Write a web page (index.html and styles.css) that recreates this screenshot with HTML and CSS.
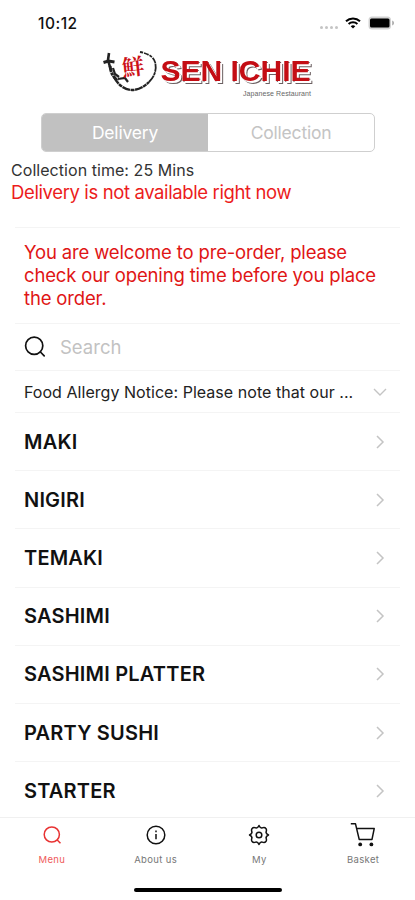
FILE: index.html
```html
<!DOCTYPE html>
<html lang="en">

<head>
    <meta charset="UTF-8">
    <meta name="viewport" content="width=device-width, initial-scale=1.0">
    <title>Sen Ichie</title>
    <link rel="stylesheet" href="styles.css">
</head>

<body>
    <div class="app">
        <div class="status-bar">
            <span class="time">10:12</span>
            <div class="status-icons">
                <span class="signal"><i></i><i></i><i></i><i></i></span>
                <svg class="wifi" width="16" height="12" viewBox="0 0 16 12" fill="none" stroke="#000" stroke-width="2">
                    <path d="M1 4.2a10.2 10.2 0 0 1 14 0M3.6 7a6.4 6.4 0 0 1 8.8 0" />
                    <path d="M8 11.6 5.7 9.3a3.4 3.4 0 0 1 4.6 0z" fill="#000" stroke="none" />
                </svg>
                <svg class="battery" width="27" height="14" viewBox="0 0 27 14">
                    <rect x="0.5" y="0.5" width="22.5" height="13" rx="3.5" fill="#d2d2d2" />
                    <rect x="2" y="2.5" width="19.5" height="9" rx="1.5" fill="#000" />
                    <path d="M24.2 4.5c2.4 1 2.4 4 0 5z" fill="#aaa" />
                </svg>
            </div>
        </div>

        <div class="logo">
            <svg width="214" height="50" viewBox="0 0 214 50">
                <!-- brush circle -->
                <g fill="none" stroke="#222">
                    <path d="M.5 12.500l5-1.500 6 1" stroke-width="3" />
                    <path d="M6 3l-1 7 2 7" stroke-width="2.600" />
                    <path d="M7 16c1 7 3 11 8 15" stroke-width="3" stroke-dasharray="6 .8 3 .6" />
                    <path d="M10 18l2 6 4 3M15 29l7-1 3 4" stroke-width="2.200" />
                    <path d="M11 27c4 8 11 13 18 13 6 0 12-3 17-8" stroke-width="2.400" stroke-dasharray="8 .6 4 .6" />
                    <path d="M46 32c6-6 8-13 6-20" stroke-width="1.800" stroke-dasharray="8 .5 3 .5" />
                    <path d="M52 12c-1-4-5-8-15-10" stroke-width="1.800" stroke-dasharray="5 1 3 1" />
                </g>
                <text class="logo-kanji" x="19" y="25" transform="rotate(-6 30 17)">鮮</text>
                <text class="logo-name" x="57.500" y="31" textLength="150" lengthAdjust="spacingAndGlyphs">SEN ICHIE</text>
                <text class="logo-tag" x="140" y="45.500" textLength="68">Japanese Restaurant</text>
            </svg>
        </div>

        <div class="tabs">
            <div class="tab active">Delivery</div>
            <div class="tab">Collection</div>
        </div>

        <div class="info">
            <div class="collection-time">Collection time: 25 Mins</div>
            <div class="unavailable">Delivery is not available right now</div>
        </div>

        <div class="list">
            <div class="notice">You are welcome to pre-order, please<br>check our opening time before you place<br>the order.</div>
            <div class="search">
                <svg width="22" height="22" viewBox="0 0 22 22" fill="none" stroke="#111" stroke-width="1.7" stroke-linecap="round">
                    <circle cx="10.2" cy="9.8" r="8.6" />
                    <path d="M16.4 16l3.800 3.800" />
                </svg>
                <span>Search</span>
            </div>
            <div class="allergy">
                <span>Food Allergy Notice: Please note that our ...</span>
                <svg width="14" height="8" viewBox="0 0 14 8" fill="none" stroke="#c4c4c4" stroke-width="1.4"><path d="M1 1l6 6 6-6" /></svg>
            </div>
            <div class="category"><span>MAKI</span><svg class="chevron" viewBox="0 0 8 14"><path d="M1 1l6 6-6 6" /></svg></div>
            <div class="category"><span>NIGIRI</span><svg class="chevron" viewBox="0 0 8 14"><path d="M1 1l6 6-6 6" /></svg></div>
            <div class="category"><span>TEMAKI</span><svg class="chevron" viewBox="0 0 8 14"><path d="M1 1l6 6-6 6" /></svg></div>
            <div class="category"><span>SASHIMI</span><svg class="chevron" viewBox="0 0 8 14"><path d="M1 1l6 6-6 6" /></svg></div>
            <div class="category"><span>SASHIMI PLATTER</span><svg class="chevron" viewBox="0 0 8 14"><path d="M1 1l6 6-6 6" /></svg></div>
            <div class="category"><span>PARTY SUSHI</span><svg class="chevron" viewBox="0 0 8 14"><path d="M1 1l6 6-6 6" /></svg></div>
            <div class="category"><span>STARTER</span><svg class="chevron" viewBox="0 0 8 14"><path d="M1 1l6 6-6 6" /></svg></div>
        </div>

        <div class="nav">
            <div class="nav-item active">
                <svg width="26" height="26" viewBox="0 0 26 26">
                    <circle cx="12.8" cy="12.5" r="7.6" />
                    <path d="M18.200 18l3.300 3.300" />
                </svg>
                <span>Menu</span>
            </div>
            <div class="nav-item">
                <svg width="26" height="26" viewBox="0 0 26 26">
                    <circle cx="13" cy="13" r="8.8" />
                    <path d="M13 12v5.3M13 8.5v1.8" />
                </svg>
                <span>About us</span>
            </div>
            <div class="nav-item">
                <!-- eight-lobed cog -->
                <svg width="26" height="26" viewBox="0 0 26 26" stroke-linejoin="round">
                    <path d="M13 3.500Q14.200 6.300 16.100 5.900Q18.700 5 19.700 6.300Q21 7.300 20.100 9.900Q19.700 11.800 22.500 13Q19.700 14.200 20.100 16.100Q21 18.700 19.700 19.700Q18.700 21 16.100 20.100Q14.200 19.700 13 22.500Q11.800 19.700 9.900 20.100Q7.300 21 6.300 19.700Q5 18.700 5.900 16.100Q6.300 14.200 3.500 13Q6.300 11.800 5.900 9.900Q5 7.300 6.300 6.300Q7.300 5 9.900 5.900Q11.800 6.300 13 3.500z" />
                    <circle cx="13" cy="13" r="2.800" />
                </svg>
                <span>My</span>
            </div>
            <div class="nav-item">
                <svg width="26" height="26" viewBox="0 0 26 26" stroke-linejoin="round">
                    <path d="M.8 1.8h4.700l3.700 15.600h12.800l2.200-10.800H6.700" />
                    <circle class="wheel" cx="10.2" cy="22.4" r="1.9" />
                    <circle class="wheel" cx="21.4" cy="22.4" r="1.9" />
                </svg>
                <span>Basket</span>
            </div>
        </div>
        <div class="home-bar"></div>
    </div>
</body>

</html>
```
FILE: styles.css
```css
body {
    margin: 0;
    background-color: #fff;
    font-family: Inter, "Liberation Sans", sans-serif;
    color: #111;
}

.app {
    display: flex;
    flex-direction: column;
    width: 415px;
    height: 900px;
    overflow: hidden;
}

.app > div {
    flex-shrink: 0;
    box-sizing: border-box;
}

/* Status bar */
.status-bar {
    display: flex;
    justify-content: space-between;
    align-items: center;
    height: 46px;
    padding: 0 20px 0 38px;
}

.time {
    font-size: 15.5px;
    font-weight: 500;
    line-height: 20px;
    letter-spacing: 0.5px;
    padding-top: 1px;
}

.status-icons {
    display: flex;
    align-items: center;
}

.signal {
    display: flex;
    gap: 2px;
    margin: 8px 7px 0 0;
}

.signal i {
    width: 3px;
    height: 3px;
    border-radius: 50%;
    background-color: #c4c4c4;
}

.wifi {
    margin-right: 7px;
}

/* Logo */
.logo {
    height: 67px;
    padding: 4px 0 0 103px;
}

.logo svg {
    display: block;
}

.logo-kanji {
    font-family: "Noto Serif CJK SC", "Noto Sans CJK TC", sans-serif;
    font-size: 22px;
    font-weight: 700;
    fill: #cc1118;
}

/* red letters, a white gap, then a thin dark edge */
.logo-name {
    font-family: "Liberation Sans", Arial, sans-serif;
    font-size: 30px;
    font-weight: 700;
    fill: #c40d14;
    filter: drop-shadow(2px 2px 0 #fff) drop-shadow(1px 1px 0 #6b5f61);
}

.logo-tag {
    font-family: "Liberation Sans", Arial, sans-serif;
    font-size: 7px;
    fill: #666;
}

/* Delivery / Collection */
.tabs {
    display: flex;
    height: 39px;
    margin: 0 40px 0 41px;
    border: 1px solid #cfcfcf;
    border-radius: 5px;
    overflow: hidden;
}

.tab {
    flex: 1;
    line-height: 37px;
    text-align: center;
    font-size: 17.5px;
    letter-spacing: -0.2px;
    color: #c4c4c4;
}

.tab.active {
    background-color: #c1c1c1;
    color: #fff;
}

.info {
    height: 75px;
    padding: 7px 11px 0;
}

.collection-time {
    font-size: 16px;
    line-height: 22px;
    letter-spacing: 0.05px;
    color: #333;
}

.unavailable {
    font-size: 18.5px;
    line-height: 22px;
    letter-spacing: -0.38px;
    color: #ec1c1c;
}

/* Menu list */
.list {
    height: 590px;
    padding: 0 15px;
    overflow: hidden;
}

.list > div {
    box-sizing: border-box;
    border-top: 1px solid #f4f4f4;
    padding: 0 13px 0 9px;
}

.list .notice {
    height: 96px;
    padding-top: 13px;
    font-size: 18.5px;
    line-height: 23px;
    letter-spacing: -0.16px;
    color: #e01515;
}

.search {
    display: flex;
    align-items: center;
    gap: 14px;
    height: 47px;
    font-size: 18.5px;
    color: #c2c2c2;
}

.allergy {
    display: flex;
    justify-content: space-between;
    align-items: center;
    height: 42px;
    font-size: 16px;
    letter-spacing: 0.04px;
    color: #222;
    white-space: nowrap;
}

.category {
    display: flex;
    justify-content: space-between;
    align-items: center;
    height: 58.2px;
    font-size: 20px;
    font-weight: 600;
    letter-spacing: 0.2px;
}

.chevron {
    width: 8px;
    height: 14px;
    margin-right: 3px;
    fill: none;
    stroke: #c4c4c4;
    stroke-width: 1.5px;
    overflow: visible;
}

/* Bottom navigation */
.nav {
    display: flex;
    height: 61px;
    border-top: 1px solid #f0f0f0;
}

.nav-item {
    flex: 1;
    display: flex;
    flex-direction: column;
    align-items: center;
    padding-top: 4px;
    font-size: 9.5px;
    color: #777;
}

.nav-item svg {
    fill: none;
    stroke: #111;
    stroke-width: 1.5px;
    overflow: visible;
}

.nav-item .wheel {
    fill: #111;
    stroke: none;
}

.nav-item span {
    margin-top: 6px;
    line-height: 12px;
    letter-spacing: 0.35px;
}

.nav-item.active {
    color: #ef5a5a;
}

.nav-item.active svg {
    stroke: #e83333;
}

.home-bar {
    width: 148px;
    height: 4px;
    margin: 10px 0 0 134px;
    border-radius: 2px;
    background-color: #000;
}
```
